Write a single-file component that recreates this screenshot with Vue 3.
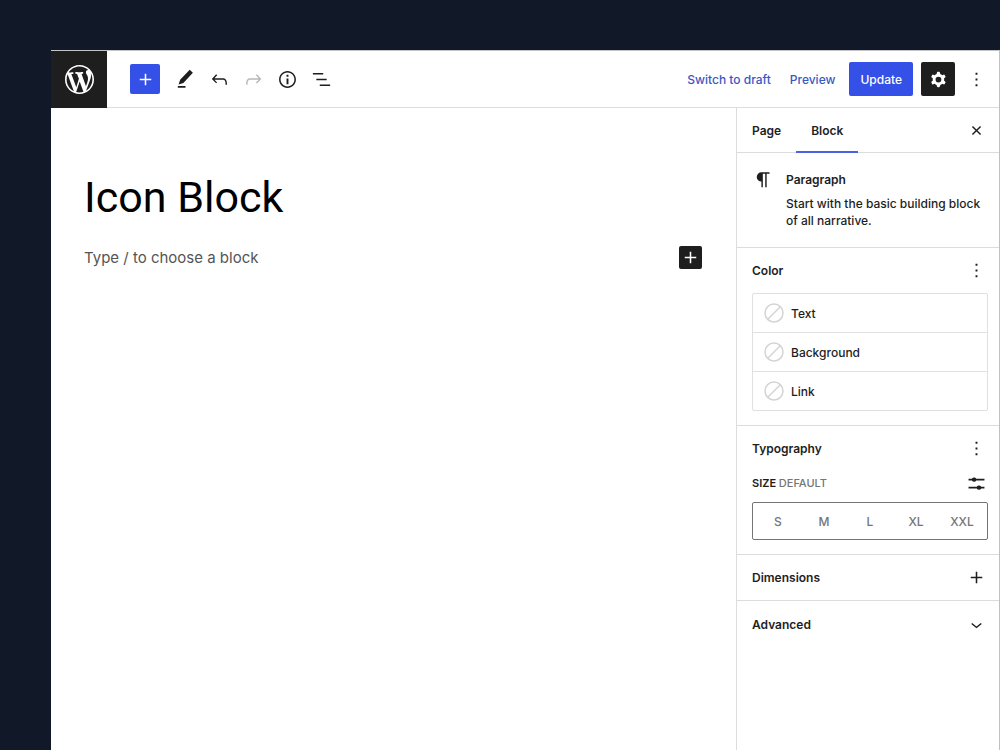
<script setup>
import { ref } from 'vue'

const icons = {
  plus: 'M18 11.2h-5.2V6h-1.6v5.2H6v1.6h5.2V18h1.6v-5.2H18z',
  pencil: 'm19.7 5-3.3-3.1-10 10.3-1.6 4.9 5-1.5L19.7 5ZM12 18.8H4v1.7h8z',
  undo: 'M18.3 11.7c-.6-.6-1.4-.9-2.3-.9H6.7l2.9-3.3-1.1-1-4.5 5L8.5 16l1-1-2.7-2.7H16c.5 0 .9.2 1.3.5 1 1 1 3.4 1 4.5v.3h1.5v-.2c0-1.5 0-4.3-1.5-5.7z',
  redo: 'M15.6 6.5l-1.1 1 2.9 3.3H8c-.9 0-1.7.3-2.3.9-1.4 1.5-1.4 4.2-1.4 5.6v.2h1.5v-.3c0-1.1 0-3.5 1-4.5.3-.3.7-.5 1.3-.5h9.2L14.5 15l1.1 1.1 4.6-4.6-4.6-5z',
  info: 'M12 3.2c-4.8 0-8.8 3.9-8.8 8.8 0 4.8 3.9 8.8 8.8 8.8 4.8 0 8.8-3.9 8.8-8.8 0-4.8-4-8.8-8.8-8.8zm0 16c-4 0-7.2-3.3-7.2-7.2C4.8 8 8 4.8 12 4.8s7.2 3.3 7.2 7.2c0 4-3.2 7.2-7.2 7.2zM11 17h2v-6h-2v6zm0-8h2V7h-2v2z',
  list: 'M13.8 5.2H3v1.5h10.8V5.2zm-3.6 12v1.5H21v-1.5H10.2zm7.2-6H6.6v1.5h10.8v-1.5z',
  cog: 'M10.289 4.836A1 1 0 0111.275 4h1.306a1 1 0 01.987.836l.244 1.466c.787.26 1.503.679 2.108 1.218l1.393-.522a1 1 0 011.216.437l.653 1.13a1 1 0 01-.23 1.273l-1.148.944a6.025 6.025 0 010 2.435l1.149.946a1 1 0 01.23 1.272l-.653 1.13a1 1 0 01-1.216.437l-1.394-.522c-.605.54-1.32.958-2.108 1.218l-.244 1.466a1 1 0 01-.987.836h-1.306a1 1 0 01-.986-.836l-.244-1.466a5.995 5.995 0 01-2.108-1.218l-1.394.522a1 1 0 01-1.217-.436l-.653-1.131a1 1 0 01.23-1.272l1.149-.946a6.026 6.026 0 010-2.435l-1.148-.944a1 1 0 01-.23-1.272l.653-1.131a1 1 0 011.217-.437l1.393.522a5.994 5.994 0 012.108-1.218l.244-1.466zM14.929 12a3 3 0 11-6 0 3 3 0 016 0z',
  more: 'M13 19h-2v-2h2v2zm0-6h-2v-2h2v2zm0-6h-2V5h2v2z',
  close: 'M12 13.06l3.712 3.713 1.061-1.06L13.061 12l3.712-3.712-1.06-1.06L12 10.938 8.288 7.227l-1.061 1.06L10.939 12l-3.712 3.712 1.06 1.061L12 13.061z',
  pilcrow: 'M9.8 14.2V20h1.5V6h2.5v14h1.5V6h3V4.5H9.8a4.85 4.85 0 0 0 0 9.7z',
  sliders: 'M20.3 7.1h-8.5a2.6 2.6 0 0 0-4.6 0H3.7v1.7h3.5a2.6 2.6 0 0 0 4.6 0h8.5zM20.3 15.5h-3.4a2.6 2.6 0 0 0-4.6 0H3.7v1.7h8.6a2.6 2.6 0 0 0 4.6 0h3.4z',
  chevron: 'M17.5 11.6L12 16l-5.5-4.4.9-1.2L12 14l4.5-3.6 1 1.2z',
}

const tools = [
  { icon: 'pencil', label: 'Tools' },
  { icon: 'undo', label: 'Undo' },
  { icon: 'redo', label: 'Redo', disabled: true },
  { icon: 'info', label: 'Details' },
  { icon: 'list', label: 'List view' },
]
const colors = ['Text', 'Background', 'Link']
const sizes = ['S', 'M', 'L', 'XL', 'XXL']
const tabs = ['Page', 'Block']
const activeTab = ref('Block')
const content = ref('')
</script>

<template>
  <div class="stage">
    <div class="editor">
      <header class="topbar">
        <a class="logo" href="#" aria-label="View pages">
          <svg viewBox="0 0 20 20" aria-hidden="true">
            <path d="M20 10c0-5.51-4.49-10-10-10C4.48 0 0 4.49 0 10c0 5.52 4.48 10 10 10 5.51 0 10-4.48 10-10zM7.78 15.37L4.37 6.22c.55-.02 1.17-.08 1.17-.08.5-.06.44-1.13-.06-1.11 0 0-1.45.11-2.37.11-.18 0-.37 0-.58-.01C4.12 2.69 6.87 1.11 10 1.11c2.33 0 4.45.87 6.05 2.34-.68-.11-1.65.39-1.65 1.58 0 .74.45 1.36.9 2.1.35.61.55 1.36.55 2.46 0 1.49-1.4 5-1.4 5l-3.03-8.37c.54-.02.82-.17.82-.17.5-.05.44-1.25-.06-1.22 0 0-1.44.12-2.38.12-.87 0-2.33-.12-2.33-.12-.5-.03-.56 1.2-.06 1.22l.92.08 1.26 3.41zM17.41 10c.24-.64.74-1.87.43-4.25.7 1.29 1.05 2.71 1.05 4.25 0 3.29-1.73 6.24-4.4 7.78.97-2.59 1.94-5.2 2.92-7.78zM6.1 18.09C3.12 16.65 1.11 13.53 1.11 10c0-1.3.23-2.48.72-3.59C3.25 10.3 4.67 14.2 6.1 18.09zm4.03-6.63l2.58 6.98c-.86.29-1.76.45-2.71.45-.79 0-1.57-.11-2.29-.33.81-2.38 1.62-4.74 2.42-7.1z" />
          </svg>
        </a>
        <div class="tools">
          <button class="inserter" type="button" aria-label="Add block">
            <svg class="icon" viewBox="0 0 24 24"><path :d="icons.plus" /></svg>
          </button>
          <button v-for="t in tools" :key="t.icon" class="tool" type="button" :aria-label="t.label" :disabled="t.disabled">
            <svg class="icon" viewBox="0 0 24 24"><path :d="icons[t.icon]" /></svg>
          </button>
        </div>
        <div class="actions">
          <button class="text-button" type="button">Switch to draft</button>
          <button class="text-button" type="button">Preview</button>
          <button class="update" type="button">Update</button>
          <button class="settings" type="button" aria-label="Settings">
            <svg class="icon" viewBox="0 0 24 24"><path fill-rule="evenodd" :d="icons.cog" /></svg>
          </button>
          <button class="icon-button" type="button" aria-label="Options">
            <svg class="icon" viewBox="0 0 24 24"><path :d="icons.more" /></svg>
          </button>
        </div>
      </header>

      <div class="body">
        <main class="canvas">
          <h1>Icon Block</h1>
          <div class="prompt">
            <input v-model="content" type="text" aria-label="Empty block" placeholder="Type / to choose a block" />
            <button class="add" type="button" aria-label="Add block">
              <svg class="icon" viewBox="0 0 24 24"><path :d="icons.plus" /></svg>
            </button>
          </div>
        </main>

        <aside class="sidebar">
          <div class="tabs">
            <div class="tablist" role="tablist">
              <button v-for="tab in tabs" :key="tab" type="button" role="tab" class="tab" :class="{ active: tab === activeTab }" :aria-selected="tab === activeTab" @click="activeTab = tab">{{ tab }}</button>
            </div>
            <button class="icon-button" type="button" aria-label="Close settings">
              <svg class="icon" viewBox="0 0 24 24"><path :d="icons.close" /></svg>
            </button>
          </div>

          <section class="card">
            <svg class="icon" viewBox="0 0 24 24"><path :d="icons.pilcrow" /></svg>
            <div>
              <h2>Paragraph</h2>
              <p>Start with the basic building block of all narrative.</p>
            </div>
          </section>

          <section class="panel">
            <div class="panel-head">
              <h2>Color</h2>
              <button class="icon-button" type="button" aria-label="Color options">
                <svg class="icon" viewBox="0 0 24 24"><path :d="icons.more" /></svg>
              </button>
            </div>
            <div class="color-list">
              <button v-for="c in colors" :key="c" class="color" type="button">
                <svg class="swatch" viewBox="0 0 20 20" aria-hidden="true">
                  <circle cx="10" cy="10" r="9" />
                  <path d="M4 16 16 4" />
                </svg>
                {{ c }}
              </button>
            </div>
          </section>

          <section class="panel typography">
            <div class="panel-head">
              <h2>Typography</h2>
              <button class="icon-button" type="button" aria-label="Typography options">
                <svg class="icon" viewBox="0 0 24 24"><path :d="icons.more" /></svg>
              </button>
            </div>
            <div class="size-head">
              <span id="size-label" class="size-label">SIZE <span>DEFAULT</span></span>
              <button class="icon-button" type="button" aria-label="Set custom size">
                <svg class="icon" viewBox="0 0 24 24"><path :d="icons.sliders" /></svg>
              </button>
            </div>
            <div class="sizes" role="group" aria-labelledby="size-label">
              <button v-for="s in sizes" :key="s" type="button">{{ s }}</button>
            </div>
          </section>

          <section class="panel closed">
            <div class="panel-head">
              <h2>Dimensions</h2>
              <button class="icon-button" type="button" aria-label="Dimensions options">
                <svg class="icon" viewBox="0 0 24 24"><path :d="icons.plus" /></svg>
              </button>
            </div>
          </section>

          <section class="panel closed last">
            <div class="panel-head">
              <h2>Advanced</h2>
              <button class="icon-button" type="button" aria-label="Expand advanced">
                <svg class="icon" viewBox="0 0 24 24"><path :d="icons.chevron" /></svg>
              </button>
            </div>
          </section>
        </aside>
      </div>
    </div>
  </div>
</template>

<style>
body {
  margin: 0;
  background: #111827;
}
</style>

<style scoped>
.stage,
.stage * {
  box-sizing: border-box;
}
.stage {
  display: flex;
  min-height: 100vh;
  padding: 50px 0 0 51px;
  background: #111827;
  color: #1e1e1e;
  font-family: Inter, "Liberation Sans", sans-serif;
  font-size: 12px;
  font-weight: 500;
  line-height: 17px;
}
.editor {
  flex: 1;
  display: flex;
  flex-direction: column;
  min-width: 0;
  background: #fff;
  border-top: 1px solid #c4c4c8;
  border-right: 1px solid #c0c0c4;
}
h1,
h2,
p {
  margin: 0;
}
h2 {
  font-size: 12px;
  line-height: 17px;
  font-weight: 600;
}
button,
input {
  margin: 0;
  padding: 0;
  border: 0;
  background: none;
  color: inherit;
  font: inherit;
}
button {
  display: flex;
  align-items: center;
  justify-content: center;
  flex: none;
  cursor: pointer;
}
.icon {
  display: block;
  flex: none;
  width: 23px;
  height: 23px;
  fill: currentColor;
}
.topbar {
  display: flex;
  align-items: center;
  height: 57px;
  border-bottom: 1px solid #dcdcdc;
}
.logo {
  display: flex;
  align-items: center;
  justify-content: center;
  align-self: stretch;
  flex: none;
  width: 56px;
  background: #1e1e1e;
  margin-bottom: -1px;
}
.logo svg {
  width: 29px;
  height: 29px;
  fill: #fff;
}
.tools {
  display: flex;
  align-items: center;
  margin-left: 23px;
}
.inserter {
  width: 30px;
  height: 30px;
  margin-right: 8px;
  border-radius: 2px;
  background: #3450e6;
  color: #fff;
}
.tool {
  width: 34px;
  height: 34px;
}
.tool:disabled {
  color: #b8b8b8;
}
.actions {
  display: flex;
  align-items: center;
  margin-left: auto;
  padding-right: 11px;
}
.text-button {
  margin-right: 19px;
  color: #3858c4;
}
.text-button + .text-button {
  margin-right: 14px;
}
.update {
  height: 34px;
  padding: 0 11px;
  border-radius: 2px;
  background: #3450e6;
  color: #fff;
}
.settings {
  width: 34px;
  height: 34px;
  margin: 0 10px 0 8px;
  border-radius: 2px;
  background: #1e1e1e;
  color: #fff;
}
.icon-button {
  width: 23px;
  height: 23px;
}
.body {
  flex: 1;
  display: flex;
}
.canvas {
  flex: 1;
  min-width: 0;
  padding: 62px 34px 0 33px;
}
h1 {
  color: #000;
  font-family: Roboto, Inter, sans-serif;
  font-size: 43px;
  line-height: 54px;
  font-weight: 400;
}
.prompt {
  display: flex;
  align-items: center;
  margin-top: 22px;
}
.prompt input {
  flex: 1;
  min-width: 0;
  height: 23px;
  outline: 0;
  font-size: 15px;
  font-weight: 400;
  line-height: 23px;
}
.prompt input::placeholder {
  color: #555;
  opacity: 1;
}
.add {
  width: 23px;
  height: 23px;
  border-radius: 2px;
  background: #1e1e1e;
  color: #fff;
}
.sidebar {
  flex: none;
  width: 263px;
  border-left: 1px solid #dcdcdc;
}
.tabs {
  display: flex;
  align-items: center;
  justify-content: space-between;
  height: 45px;
  padding-right: 11px;
  border-bottom: 1px solid #dcdcdc;
}
.tablist {
  display: flex;
  align-self: stretch;
}
.tab {
  height: 45px;
  padding: 0 15px;
  border-bottom: 2px solid transparent;
  border-top: 2px solid transparent;
  font-weight: 600;
}
.tab.active {
  border-bottom-color: #4a63e4;
}
.card {
  display: flex;
  gap: 11px;
  padding: 18px 15px;
  min-height: 95px;
  border-bottom: 1px solid #dcdcdc;
}
.card .icon {
  margin-top: -3px;
}
.card p {
  margin-top: 7px;
}
.panel {
  padding: 11px 11px 14px 15px;
  border-bottom: 1px solid #dcdcdc;
}
.panel-head,
.size-head {
  display: flex;
  align-items: center;
  justify-content: space-between;
}
.color-list {
  margin-top: 11px;
  border: 1px solid #e0e0e0;
  border-radius: 2px;
}
.color {
  justify-content: flex-start;
  gap: 7px;
  width: 100%;
  height: 38px;
  padding-left: 11px;
}
.color + .color {
  height: 39px;
  border-top: 1px solid #e0e0e0;
}
.swatch {
  width: 20px;
  height: 20px;
  fill: none;
  stroke: #d4d4d4;
  stroke-width: 1.5;
}
.size-head {
  margin-top: 12px;
}
.size-label {
  font-size: 11px;
  font-weight: 600;
}
.size-label span {
  color: #757575;
  font-weight: 500;
}
.sizes {
  display: grid;
  grid-template-columns: repeat(5, 1fr);
  height: 38px;
  margin-top: 7px;
  padding: 0 2px;
  border: 1px solid #757575;
  border-radius: 2px;
  color: #757575;
}
.closed {
  padding-bottom: 11px;
}
.last {
  padding-top: 12px;
  border-bottom: 0;
}
</style>
